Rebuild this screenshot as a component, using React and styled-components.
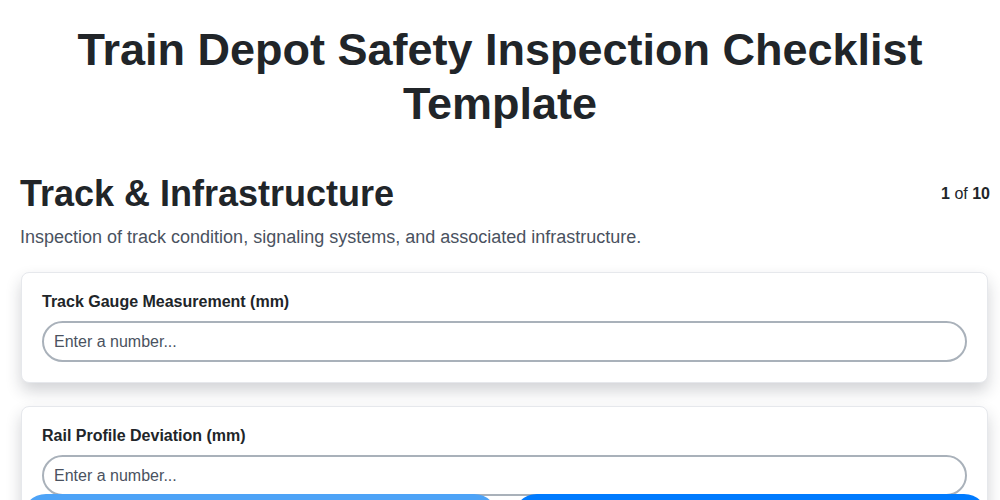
import React from "react"
import styled, { createGlobalStyle } from "styled-components"

const GlobalStyle = createGlobalStyle`
  body {
    margin: 0;
    background: #ffffff;
    font-family: "Liberation Sans", Arial, sans-serif;
    color: #212529;
  }
`

const Header = styled.header`
  padding: 23px 40px 0;
`

const Page = styled.main`
  padding: 0 10px 80px 20px;
`

const Title = styled.h1`
  margin: 0;
  text-align: center;
  font-size: 45px;
  line-height: 54px;
  font-weight: 700;
  color: #212529;
`

const SectionHeader = styled.div`
  display: flex;
  align-items: center;
  justify-content: space-between;
  margin-top: 41px;
`

const SectionTitle = styled.h2`
  margin: 0;
  font-size: 36px;
  line-height: 44px;
  font-weight: 700;
  color: #212529;
`

const Counter = styled.div`
  font-size: 16px;
  color: #212529;

  b {
    font-weight: 700;
  }
`

const Description = styled.p`
  margin: 10px 0 24px;
  font-size: 18px;
  line-height: 22px;
  color: #4a5260;
`

const Card = styled.div`
  margin: 0 2px 23px 1px;
  padding: 20px;
  background: #ffffff;
  border: 1px solid #e6e8ec;
  border-radius: 8px;
  box-shadow: 0 8px 16px rgba(30, 35, 50, 0.2);
`

const Label = styled.label`
  display: block;
  margin-bottom: 10px;
  font-size: 16px;
  line-height: 18px;
  font-weight: 700;
  color: #212529;
`

const Input = styled.input`
  display: block;
  box-sizing: border-box;
  width: 100%;
  height: 41px;
  padding: 0 10px;
  border: 2px solid #a9b1ba;
  border-radius: 21px;
  font-family: "Liberation Sans", Arial, sans-serif;
  font-size: 16px;
  color: #212529;
  background: #ffffff;
  outline: none;

  &::placeholder {
    color: #4a5260;
  }
`

const Footer = styled.div`
  position: fixed;
  left: 22px;
  right: 12px;
  bottom: -42px;
  display: flex;
  gap: 15px;
`

const Button = styled.button`
  flex: 1;
  height: 48px;
  border: none;
  border-radius: 24px;
  font-family: "Liberation Sans", Arial, sans-serif;
  font-size: 16px;
  font-weight: 700;
  color: #ffffff;
  background: ${props => props.$primary ? "#007bff" : "#4da3f7"};
`

const fields = [
  "Track Gauge Measurement (mm)",
  "Rail Profile Deviation (mm)",
]

export default function App() {
  return (
    <>
      <GlobalStyle />
      <Header>
        <Title>Train Depot Safety Inspection Checklist Template</Title>
      </Header>
      <Page>
        <SectionHeader>
          <SectionTitle>Track &amp; Infrastructure</SectionTitle>
          <Counter><b>1</b> of <b>10</b></Counter>
        </SectionHeader>
        <Description>
          Inspection of track condition, signaling systems, and associated infrastructure.
        </Description>
        { fields.map(field =>
          <Card key={ field }>
            <Label>{ field }</Label>
            <Input type="number" placeholder="Enter a number..." />
          </Card>
        ) }
      </Page>
      <Footer>
        <Button>Previous</Button>
        <Button $primary>Next</Button>
      </Footer>
    </>
  )
}
